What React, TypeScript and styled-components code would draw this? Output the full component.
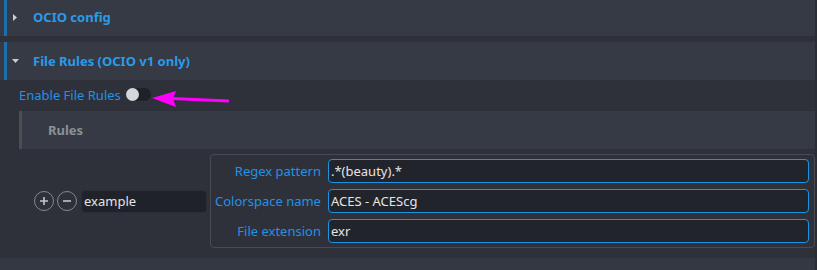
import React from "react";
import styled, { createGlobalStyle } from "styled-components";

const Global = createGlobalStyle`
  html, body { margin: 0; padding: 0; background: #2e313a; }
  body { font-family: "Noto Sans", "DejaVu Sans", sans-serif; font-size: 13px; }
  * { box-sizing: border-box; }
`;

const Page = styled.div`
  position: relative;
  width: 817px;
  height: 270px;
  border-right: 2px solid #2a2d33;
  background: #2e313a;
  display: flex;
  flex-direction: column;
  overflow: hidden;
`;

const Header = styled.div<{ $h: number; $mt?: number }>`
  flex: none;
  height: ${(p) => p.$h}px;
  margin-top: ${(p) => p.$mt ?? 0}px;
  background: #353a44;
  display: flex;
  align-items: stretch;
  padding-left: 4px;
`;

const Bar = styled.span`
  width: 3px;
  background: #1b6fab;
`;

const ArrowBox = styled.span`
  width: 8px;
  margin-left: 4px;
  display: flex;
  align-items: center;
  justify-content: center;
`;

const Title = styled.span`
  margin-left: 14px;
  display: flex;
  align-items: center;
  font-weight: 700;
  color: #2a9bea;
  padding-bottom: 1px;
`;

const Content = styled.div`
  flex: none;
  display: flex;
  flex-direction: column;
  padding-left: 19px;
  background: #2e313a;
`;

const EnableRow = styled.div`
  height: 31px;
  display: flex;
  align-items: center;
  gap: 5px;
  padding-bottom: 1px;
`;

const BlueLabel = styled.span`
  color: #1f93e6;
  white-space: nowrap;
`;

const Toggle = styled.span`
  width: 25px;
  height: 13px;
  border-radius: 7px;
  background: #1e2127;
  position: relative;
  margin-top: -2px;
  &::before {
    content: "";
    position: absolute;
    left: 0;
    top: 0;
    width: 13px;
    height: 13px;
    border-radius: 50%;
    background: #d5d7dc;
  }
`;

const RulesHeader = styled.div`
  height: 38px;
  background: #353a44;
  border-left: 3px solid #4b4e53;
  padding-left: 26px;
  display: flex;
  align-items: center;
  font-weight: 700;
  color: #8b9097;
`;

const RuleRow = styled.div`
  display: flex;
  align-items: center;
  gap: 3px;
  padding: 5px 0 10px 15px;
`;

const CircleButton = styled.span`
  width: 20px;
  height: 20px;
  border-radius: 50%;
  border: 1px solid #85888e;
  display: flex;
  align-items: center;
  justify-content: center;
`;

const NameInput = styled.div`
  width: 126px;
  height: 23px;
  background: #1f2229;
  border: 1px solid #2b2e36;
  border-radius: 4px;
  color: #e4e4e4;
  padding-left: 2px;
  display: flex;
  align-items: center;
  margin-left: 1px;
`;

const GroupBox = styled.div`
  flex: 1;
  border: 1px solid #484b52;
  border-radius: 4px;
  padding: 4px 5px 4px 4px;
  display: grid;
  grid-template-columns: auto 1fr;
  column-gap: 7px;
  row-gap: 6px;
  align-items: center;
`;

const FieldLabel = styled(BlueLabel)`
  text-align: right;
`;

const Field = styled.div`
  height: 24px;
  border: 1px solid #1a93e4;
  border-radius: 4px;
  background: #21242b;
  color: #e4e4e4;
  padding-left: 2px;
  display: flex;
  align-items: center;
`;

const Footer = styled.div`
  flex: 1;
  background: #343842;
`;

const Annotation = styled.svg`
  position: absolute;
  left: 150px;
  top: 89px;
`;

const RightTri = () => (
  <svg width="4" height="7" viewBox="0 0 4 7">
    <polygon points="0,0 4,3.5 0,7" fill="#c9ccd1" />
  </svg>
);

const DownTri = () => (
  <svg width="7" height="4" viewBox="0 0 7 4">
    <polygon points="0,0 7,0 3.5,4" fill="#c9ccd1" />
  </svg>
);

const Plus = () => (
  <svg width="10" height="10" viewBox="0 0 10 10">
    <path d="M5 1v8M1 5h8" stroke="#c4c6cb" strokeWidth="1.6" />
  </svg>
);

const Minus = () => (
  <svg width="10" height="10" viewBox="0 0 10 10">
    <path d="M1 5h8" stroke="#c4c6cb" strokeWidth="1.6" />
  </svg>
);

const fields = [
  { label: "Regex pattern", value: ".*(beauty).*" },
  { label: "Colorspace name", value: "ACES - ACEScg" },
  { label: "File extension", value: "exr" },
];

export default function App() {
  return (
    <Page>
      <Global />
      <Header $h={38} $mt={-2}>
        <Bar />
        <ArrowBox>
          <RightTri />
        </ArrowBox>
        <Title>OCIO config</Title>
      </Header>
      <Header $h={38} $mt={6}>
        <Bar />
        <ArrowBox>
          <DownTri />
        </ArrowBox>
        <Title>File Rules (OCIO v1 only)</Title>
      </Header>
      <Content>
        <EnableRow>
          <BlueLabel>Enable File Rules</BlueLabel>
          <Toggle />
        </EnableRow>
        <RulesHeader>Rules</RulesHeader>
        <RuleRow>
          <CircleButton>
            <Plus />
          </CircleButton>
          <CircleButton>
            <Minus />
          </CircleButton>
          <NameInput>example</NameInput>
          <GroupBox>
            {fields.map((f) => (
              <React.Fragment key={f.label}>
                <FieldLabel>{f.label}</FieldLabel>
                <Field>{f.value}</Field>
              </React.Fragment>
            ))}
          </GroupBox>
        </RuleRow>
      </Content>
      <Footer />
      <Annotation width="82" height="20" viewBox="0 0 82 20">
        <polygon points="2,9 26,2 23,9.5 26,18" fill="#ff00ff" />
        <line x1="22" y1="9.5" x2="79" y2="12" stroke="#ff00ff" strokeWidth="3" />
      </Annotation>
    </Page>
  );
}
